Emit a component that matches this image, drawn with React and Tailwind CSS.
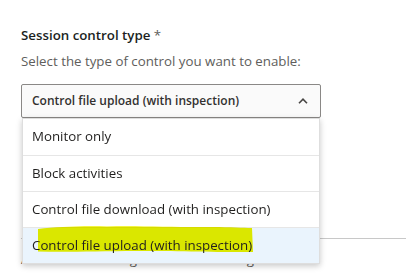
import React from "react";

const options = [
  "Monitor only",
  "Block activities",
  "Control file download (with inspection)",
  "Control file upload (with inspection)",
];

export default function App() {
  return (
    <div
      className="w-[406px] h-[275px] bg-white overflow-hidden relative"
      style={{ fontFamily: '"Open Sans", "Noto Sans", sans-serif' }}
    >
      <div className="pl-[21px] pr-[85px] pt-[25px]">
        <div className="h-[20px] leading-[20px] text-[13.3px] font-semibold text-[#201f1e]">
          Session control type <span className="font-normal text-[#605e5c]">*</span>
        </div>
        <div className="mt-[6px] h-[20px] leading-[20px] text-[13.3px] text-[#605e5c]">
          Select the type of control you want to enable:
        </div>
        <div className="relative mt-[13px]">
          <div className="h-[34px] border border-[#8a8886] rounded-[2px] bg-[#fafafa] flex items-center pl-[10px] pr-[12px]">
            <span className="flex-1 text-[12px] font-semibold text-[#323130]">
              Control file upload (with inspection)
            </span>
            <svg width="10" height="6" viewBox="0 0 10 6" className="mb-[1px]">
              <path d="M1 5.2 L5 1.2 L9 5.2" fill="none" stroke="#484644" strokeWidth="1.6" />
            </svg>
          </div>
          <div className="absolute left-[1px] right-[1px] top-[34px] z-10 bg-white border border-[#dedede] shadow-[0_2px_6px_rgba(0,0,0,0.22)]">
            {options.map((o, i) => (
              <div
                key={o}
                className={
                  "relative h-[36px] flex items-center pl-[9px] text-[13.3px] text-[#201f1e] " +
                  (i > 0 ? "border-t border-[#e6e6e6] " : "") +
                  (i === 3 ? "bg-[#eaf4fd]" : "")
                }
              >
                {i === 3 && (
                  <svg
                    className="absolute left-[14px] top-[-3px] mix-blend-multiply"
                    width="218"
                    height="30"
                    viewBox="0 0 218 30"
                  >
                    <path
                      d="M1 4 C 20 2, 40 1, 70 1.5 C 100 0.5, 140 2.5, 175 2 C 195 2, 205 3, 215 3 L 216 27 C 190 27.5, 140 26, 100 26 C 60 26, 30 27.5, 1 26.5 Z"
                      fill="#eef200"
                    />
                  </svg>
                )}
                <span className="relative">{o}</span>
              </div>
            ))}
          </div>
        </div>
      </div>
      <div className="mt-[120px] ml-[21px] border-t border-[#c8c8c8]" />
      <div className="ml-[21px] mt-[10px] text-[13.3px] leading-[20px] text-[#605e5c]">
        Activities matching all of the following
      </div>
    </div>
  );
}
